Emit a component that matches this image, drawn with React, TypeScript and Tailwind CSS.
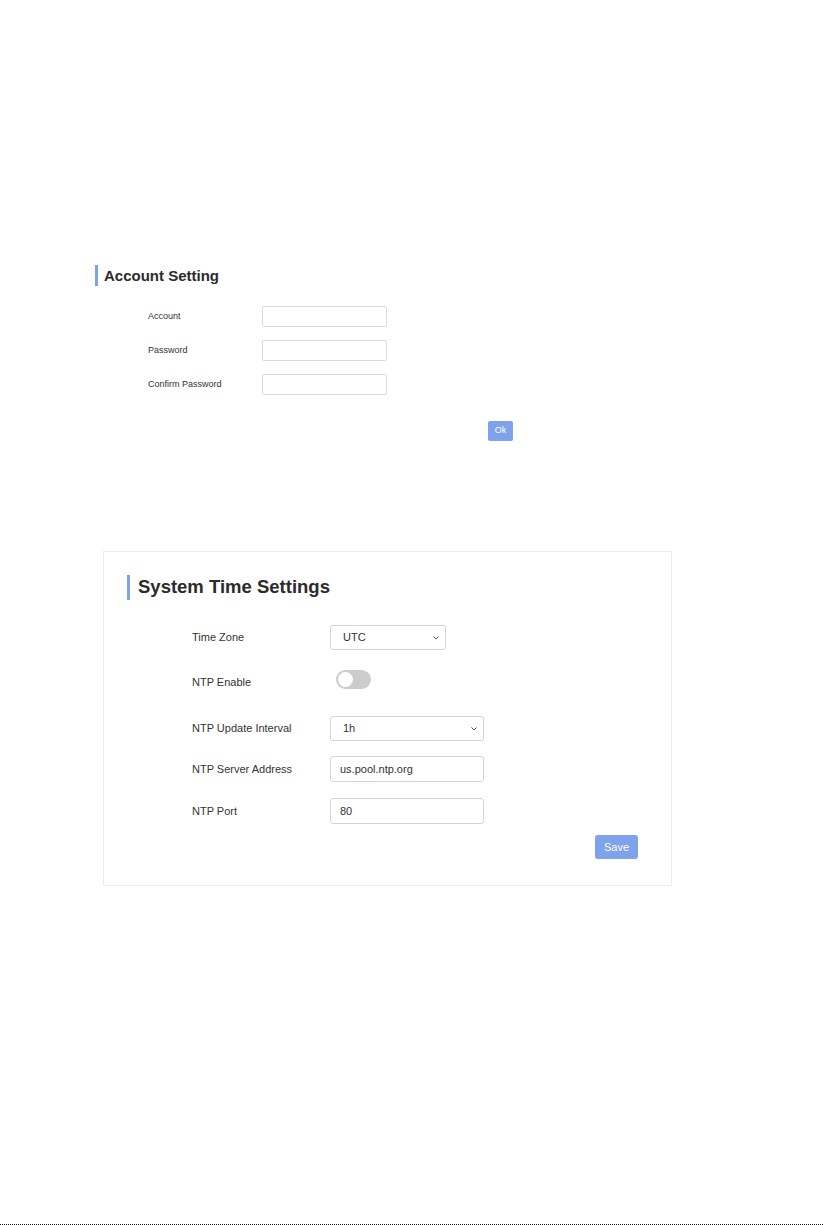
const SelectBox = ({ value, width }: { value: string; width: string }) => (
  <div
    className={`${width} h-[25px] flex items-center justify-between pl-[12px] pr-[6px] border border-[#d4d4d4] rounded-[3px] bg-white text-[11px] text-[#333]`}
  >
    <span>{value}</span>
    <svg width="6" height="4" viewBox="0 0 6 4" fill="none">
      <path d="M0.5 0.5 L3 3 L5.5 0.5" stroke="#555" strokeWidth="1" />
    </svg>
  </div>
);

const TextBox = ({ value }: { value: string }) => (
  <div className="w-[154px] h-[26px] flex items-center px-[9px] border border-[#d4d4d4] rounded-[3px] bg-white text-[11px] text-[#333]">
    {value}
  </div>
);

const AccountRow = ({ label }: { label: string }) => (
  <div className="flex items-center h-[21px]">
    <span className="w-[114px] text-[9px] text-[#333]">{label}</span>
    <div className="w-[125px] h-[21px] border border-[#dcdcdc] rounded-[2px] bg-white" />
  </div>
);

const App = () => {
  return (
    <div
      className="w-[823px] h-[1225px] bg-white flex flex-col relative"
      style={{ fontFamily: '"Liberation Sans", Arial, sans-serif' }}
    >
      {/* account block */}
      <div className="mt-[265px] ml-[95px] flex flex-col">
        <div className="border-l-[3px] border-[#7ea2ec] pl-[6px] h-[21px] flex items-center">
          <h2 className="text-[15px] font-bold text-[#2b2b2b] leading-none">Account Setting</h2>
        </div>
        <div className="ml-[53px] mt-[20px] flex flex-col gap-[13px]">
          <AccountRow label="Account" />
          <AccountRow label="Password" />
          <AccountRow label="Confirm Password" />
        </div>
        <div className="ml-[393px] mt-[26px]">
          <button className="w-[25px] h-[20px] rounded-[2px] bg-[#7ea2ec] text-white text-[9px] flex items-center justify-center">
            Ok
          </button>
        </div>
      </div>

      {/* system time card */}
      <div className="mt-[110px] ml-[103px] w-[569px] border border-[#ececec] pt-[23px] pb-[26px] pl-[23px] pr-[33px] flex flex-col">
        <div className="border-l-[3px] border-[#7ea2ec] pl-[8px] h-[25px] flex items-center">
          <h2 className="text-[18.5px] font-bold text-[#2b2b2b] leading-none">System Time Settings</h2>
        </div>

        <div className="ml-[65px] flex flex-col text-[11px] text-[#333]">
          <div className="flex items-center mt-[25px]">
            <span className="w-[138px]">Time Zone</span>
            <SelectBox value="UTC" width="w-[116px]" />
          </div>

          <div className="flex items-start mt-[20px] h-[19px]">
            <span className="w-[144px] pt-[6px] leading-[13px]">NTP Enable</span>
            <div className="w-[35px] h-[19px] rounded-full bg-[#cccccc] flex items-center pl-[2px]">
              <div className="w-[15px] h-[15px] rounded-full bg-white" />
            </div>
          </div>

          <div className="flex items-center mt-[27px]">
            <span className="w-[138px]">NTP Update Interval</span>
            <SelectBox value="1h" width="w-[154px]" />
          </div>

          <div className="flex items-center mt-[15px]">
            <span className="w-[138px]">NTP Server Address</span>
            <TextBox value="us.pool.ntp.org" />
          </div>

          <div className="flex items-center mt-[16px]">
            <span className="w-[138px]">NTP Port</span>
            <TextBox value="80" />
          </div>
        </div>

        <div className="flex justify-end mt-[11px]">
          <button className="w-[43px] h-[24px] rounded-[3px] bg-[#7ea2ec] text-white text-[11px] flex items-center justify-center">
            Save
          </button>
        </div>
      </div>

      {/* page edge */}
      <div className="absolute left-0 right-0 bottom-0 h-px border-b border-dotted border-[#111]" />
    </div>
  );
};

export default App;
